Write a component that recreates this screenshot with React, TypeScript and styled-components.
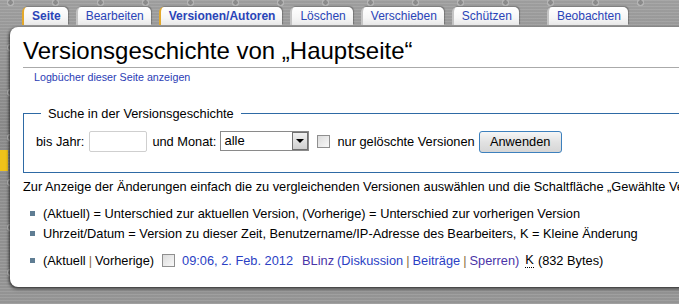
import React from "react";
import styled, { createGlobalStyle } from "styled-components";

const GlobalStyle = createGlobalStyle`
  html, body { margin: 0; padding: 0; }
  body { font-family: "Liberation Sans", Arial, sans-serif; background: #939393; }
`;

const Page = styled.div`
  width: 679px;
  height: 304px;
  overflow: hidden;
  background-color: #969696;
  background-image:
    radial-gradient(circle at 50% 50%, #8a8a8a 0 2px, #b4b4b4 2.5px 3.5px, transparent 4px),
    repeating-linear-gradient(0deg, rgba(255,255,255,0.06) 0 1px, rgba(0,0,0,0.04) 1px 3px),
    linear-gradient(180deg, #a3a3a3, #8e8e8e 40%, #9a9a9a);
  background-size: 45px 45px, auto, auto;
  background-position: -12px -20px, 0 0, 0 0;
  display: flex;
  flex-direction: column;
`;

const TabBar = styled.div`
  display: flex;
  align-items: flex-end;
  height: 27px;
  box-sizing: border-box;
  padding: 0 0 2px 22px;
  gap: 8px;
`;

const Tab = styled.div<{ $active?: boolean; $gap?: number }>`
  height: 18px;
  box-sizing: border-box;
  padding: 0 7px 0 8px;
  margin-left: ${(p) => p.$gap ?? 0}px;
  display: flex;
  align-items: center;
  font-size: 12px;
  font-weight: ${(p) => (p.$active ? "bold" : "normal")};
  color: #2a44b8;
  background: linear-gradient(180deg, #ffffff 0%, #f6f6f6 60%, #e8e8e8 100%);
  border-radius: 5px 5px 0 0;
  border-left: 2px solid ${(p) => (p.$active ? "#e3a82a" : "#c4c4c4")};
  box-shadow: 1px -1px 1px rgba(0, 0, 0, 0.25);
  white-space: nowrap;
`;

const Body = styled.div`
  display: flex;
  align-items: flex-start;
`;

const Gutter = styled.div`
  width: 10px;
  flex: none;
  display: flex;
  flex-direction: column;
`;

const YellowMark = styled.div`
  margin-top: 123px;
  width: 8px;
  height: 21px;
  background: #efc21a;
`;

const Panel = styled.div`
  width: 720px;
  flex: none;
  height: 260px;
  box-sizing: border-box;
  background: #fff;
  border-radius: 8px 0 0 8px;
  box-shadow: -1px 1px 3px rgba(0, 0, 0, 0.55), 0 2px 4px rgba(0,0,0,0.3);
  padding: 9px 0 0 13px;
  overflow: hidden;
  color: #000;
`;

const Title = styled.h1`
  margin: 0;
  font-weight: normal;
  font-size: 24px;
  line-height: 30px;
  white-space: nowrap;
  border-bottom: 1px solid #aaaaaa;
  padding-bottom: 1px;
`;

const LogLink = styled.div`
  margin: 2px 0 0 11px;
  font-size: 10.7px;
  line-height: 14px;
  color: #2b3db5;
`;

const Fieldset = styled.fieldset`
  margin: 22px 0 0 0;
  width: 740px;
  box-sizing: border-box;
  border: 1px solid #2e6aa5;
  padding: 9px 0 19px 12px;
`;

const Legend = styled.legend`
  font-size: 12.8px;
  padding: 0 7px;
  margin-left: 5px;
  line-height: 15px;
`;

const Row = styled.div`
  display: flex;
  align-items: center;
  font-size: 12.8px;
  height: 23px;
  white-space: nowrap;
`;

const TextInput = styled.div`
  width: 58px;
  height: 21px;
  box-sizing: border-box;
  border: 1px solid #cfcfcf;
  border-radius: 2px;
  margin: 0 5px 0 5px;
`;

const Select = styled.div`
  width: 89px;
  height: 20px;
  box-sizing: border-box;
  border: 1px solid #8a8a8a;
  display: flex;
  align-items: center;
  justify-content: space-between;
  margin: -2px 8px 0 4px;
  padding-left: 3px;
  font-size: 13px;
`;

const DropButton = styled.div`
  width: 16px;
  height: 18px;
  box-sizing: border-box;
  border: 1px solid #707070;
  background: linear-gradient(180deg, #f0f0f0, #cfcfcf);
  display: flex;
  align-items: center;
  justify-content: center;
`;

const Arrow = styled.div`
  width: 0;
  height: 0;
  border-left: 4px solid transparent;
  border-right: 4px solid transparent;
  border-top: 4px solid #000;
`;

const Check = styled.div<{ $m?: string }>`
  width: 13px;
  height: 13px;
  box-sizing: border-box;
  border: 1px solid #8f8f8f;
  background: linear-gradient(135deg, #dcdcdc, #f8f8f8);
  margin: ${(p) => p.$m ?? "0"};
  flex: none;
`;

const Button = styled.div`
  height: 22px;
  width: 83px;
  box-sizing: border-box;
  border: 1px solid #3d80bd;
  border-radius: 3px;
  background: linear-gradient(180deg, #f6f6f6, #e2e2e2 50%, #d6d6d6);
  display: flex;
  align-items: center;
  justify-content: center;
  font-size: 12.8px;
  margin-left: 4px;
`;

const Intro = styled.p`
  margin: 6px 0 0 0;
  font-size: 12.8px;
  line-height: 16px;
  white-space: nowrap;
`;

const List = styled.ul<{ $mt: number }>`
  list-style: none;
  margin: ${(p) => p.$mt}px 0 0 7px;
  padding: 0;
`;

const Item = styled.li<{ $h?: number }>`
  display: flex;
  align-items: center;
  gap: 8px;
  height: ${(p) => p.$h ?? 20}px;
  font-size: 12.8px;
  white-space: nowrap;
`;

const Bullet = styled.span`
  width: 5px;
  height: 5px;
  background: #5f7d93;
  flex: none;
  margin-top: 1px;
`;

const Line = styled.span`
  display: flex;
  align-items: center;
`;

const Link = styled.span<{ $c?: string; $ml?: number }>`
  color: ${(p) => p.$c ?? "#2b3fc4"};
  margin-left: ${(p) => p.$ml ?? 0}px;
`;

const Sep = styled.span`
  color: #8d6f45;
  padding: 0 3px;
`;

const Abbr = styled.span`
  border-bottom: 1px dotted #000;
  line-height: 14px;
  margin: 0 4px 0 6px;
`;

export default function App() {
  return (
    <>
      <GlobalStyle />
      <Page>
        <TabBar>
          <Tab $active>Seite</Tab>
          <Tab>Bearbeiten</Tab>
          <Tab $active>Versionen/Autoren</Tab>
          <Tab>Löschen</Tab>
          <Tab>Verschieben</Tab>
          <Tab>Schützen</Tab>
          <Tab $gap={20}>Beobachten</Tab>
        </TabBar>
        <Body>
          <Gutter>
            <YellowMark />
          </Gutter>
          <Panel>
            <Title>Versionsgeschichte von „Hauptseite“</Title>
            <LogLink>Logbücher dieser Seite anzeigen</LogLink>
            <Fieldset>
              <Legend>Suche in der Versionsgeschichte</Legend>
              <Row>
                bis Jahr:
                <TextInput />
                und Monat:
                <Select>
                  alle
                  <DropButton>
                    <Arrow />
                  </DropButton>
                </Select>
                <Check $m="0 7px 0 0" />
                nur gelöschte Versionen
                <Button>Anwenden</Button>
              </Row>
            </Fieldset>
            <Intro>
              Zur Anzeige der Änderungen einfach die zu vergleichenden Versionen auswählen und die Schaltfläche „Gewählte Versionen vergleichen“ klicken.
            </Intro>
            <List $mt={8}>
              <Item>
                <Bullet />
                (Aktuell) = Unterschied zur aktuellen Version, (Vorherige) = Unterschied zur vorherigen Version
              </Item>
              <Item>
                <Bullet />
                Uhrzeit/Datum = Version zu dieser Zeit, Benutzername/IP-Adresse des Bearbeiters, K = Kleine Änderung
              </Item>
            </List>
            <List $mt={7}>
              <Item $h={20}>
                <Bullet />
                <Line>
                  (Aktuell<Sep>|</Sep>Vorherige)
                  <Check $m="0 7px 0 8px" />
                  <Link>09:06, 2. Feb. 2012</Link>
                  <Link $c="#4a35a8" $ml={9}>BLinz</Link>
                  <Link $ml={3}>(Diskussion</Link>
                  <Sep>|</Sep>
                  <Link>Beiträge</Link>
                  <Sep>|</Sep>
                  <Link $c="#4a35a8">Sperren)</Link>
                  <Abbr>K</Abbr>
                  (832 Bytes)
                </Line>
              </Item>
            </List>
          </Panel>
        </Body>
      </Page>
    </>
  );
}
